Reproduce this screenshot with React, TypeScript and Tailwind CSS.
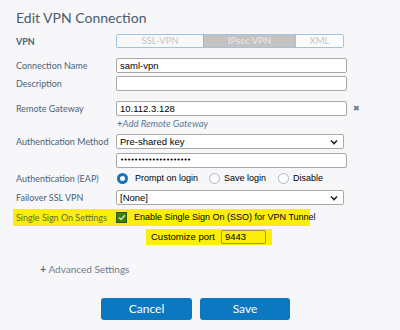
import React from "react";

const lab = "text-[9px] text-[#4b6274] leading-none whitespace-nowrap shrink-0";
const inp =
  "h-[15px] bg-white border border-[#a8a8a8] rounded-[2px] flex items-center pl-[3px] text-[9.5px] text-black leading-none whitespace-nowrap shrink-0";
const sys = { fontFamily: "'Liberation Sans', sans-serif" };

function Chevron() {
  return (
    <svg width="8" height="6" viewBox="0 0 8 6" className="mr-[5px]">
      <path d="M1 1.5 L4 4.5 L7 1.5" stroke="#222" strokeWidth="1.6" fill="none" />
    </svg>
  );
}

function Radio({ on }: { on?: boolean }) {
  return on ? (
    <span className="w-[11px] h-[11px] rounded-full border-[3px] border-[#1b72b8] bg-white inline-block" />
  ) : (
    <span className="w-[11px] h-[11px] rounded-full border border-[#a9b8c4] bg-white inline-block" />
  );
}

export default function App() {
  return (
    <div
      className="w-[400px] h-[330px] bg-[#f7f7fa] overflow-hidden relative"
      style={{ fontFamily: "Lato, 'Liberation Sans', sans-serif" }}
    >
      <div className="pl-[16px] pt-[9px]">
        <div className="text-[14px] text-[#4a5c6b] leading-[18px]">Edit VPN Connection</div>

        {/* VPN */}
        <div className="flex items-center mt-[7px] h-[14px]">
          <div className={`${lab} w-[100px] font-bold`}>VPN</div>
          <div className="flex h-[14px] w-[228px] border border-[#9fc4e2] rounded-[2px] overflow-hidden text-[9.5px] leading-none">
            <div className="w-[86px] flex items-center justify-center text-[#bfc4ca] bg-[#f8f9fb]">SSL-VPN</div>
            <div className="w-[93px] flex items-center justify-center text-[#eaeaea] bg-[#c3c3c3] border-l border-[#b0b0b0] border-r border-r-[#9fc4e2]">IPsec VPN</div>
            <div className="flex-1 flex items-center justify-center text-[#bfc4ca] bg-[#fbfcfd]">XML</div>
          </div>
        </div>

        {/* Connection Name */}
        <div className="flex items-center mt-[10px]">
          <div className={`${lab} w-[100px]`}>Connection Name</div>
          <div className={`${inp} w-[231px]`} style={sys}>saml-vpn</div>
        </div>
        {/* Description */}
        <div className="flex items-center mt-[3px]">
          <div className={`${lab} w-[100px]`}>Description</div>
          <div className={`${inp} w-[231px]`} />
        </div>

        {/* Remote Gateway */}
        <div className="flex items-center mt-[10px]">
          <div className={`${lab} w-[100px]`}>Remote Gateway</div>
          <div className={`${inp} w-[231px]`} style={sys}>10.112.3.128</div>
          <span className="ml-[6px] text-[8px] text-[#5b7a90] leading-none" style={{ fontFamily: "'DejaVu Sans', sans-serif" }}>✖</span>
        </div>
        <div className="flex mt-[2px] h-[12px] items-center">
          <div className="w-[100px] shrink-0" />
          <div className="text-[9.5px] italic text-[#5e7d95] leading-none pl-[1px] whitespace-nowrap">
            <span className="not-italic font-bold">+</span>Add Remote Gateway
          </div>
        </div>

        {/* Auth Method */}
        <div className="flex items-center mt-[4px]">
          <div className={`${lab} w-[100px]`}>Authentication Method</div>
          <div className={`${inp} w-[228px] justify-between`} style={sys}>
            <span>Pre-shared key</span>
            <Chevron />
          </div>
        </div>
        <div className="flex items-center mt-[4px]">
          <div className="w-[100px] shrink-0" />
          <div className={`${inp} w-[231px]`}>
            <span className="text-[7px] tracking-[-0.6px] leading-none" style={{ fontFamily: "'DejaVu Sans', sans-serif" }}>••••••••••••••••••••</span>
          </div>
        </div>

        {/* EAP */}
        <div className="flex items-center mt-[4px] h-[12px]">
          <div className={`${lab} w-[100px]`}>Authentication (EAP)</div>
          <div className="flex items-center text-[9px] text-black leading-none whitespace-nowrap" style={sys}>
            <span className="ml-[1px] flex"><Radio on /></span>
            <span className="ml-[7px]">Prompt on login</span>
            <span className="ml-[11px] flex"><Radio /></span>
            <span className="ml-[4px]">Save login</span>
            <span className="ml-[12px] flex"><Radio /></span>
            <span className="ml-[4px]">Disable</span>
          </div>
        </div>

        {/* Failover */}
        <div className="flex items-center mt-[6px]">
          <div className={`${lab} w-[100px]`}>Failover SSL VPN</div>
          <div className={`${inp} w-[228px] justify-between`} style={sys}>
            <span>[None]</span>
            <Chevron />
          </div>
        </div>

        {/* SSO */}
        <div className="flex items-center mt-[4px] h-[17px] -ml-[3px] w-[297px] bg-[#fbee0c] pl-[3px]">
          <div className="text-[9px] text-[#5f6e2c] leading-none w-[100px] whitespace-nowrap shrink-0">Single Sign On Settings</div>
          <span className="w-[11px] h-[11px] shrink-0 bg-[#3f7e12] border border-[#2c5a0c] flex items-center justify-center">
            <svg width="8" height="7" viewBox="0 0 8 7">
              <path d="M1 3.5 L3 5.5 L7 1.2" stroke="#d8e890" strokeWidth="1.4" fill="none" />
            </svg>
          </span>
          <span className="ml-[7px] text-[9px] text-black leading-none whitespace-nowrap" style={sys}>
            Enable Single Sign On (SSO) for VPN Tunnel
          </span>
        </div>
        <div className="flex mt-[3px]">
          <div className="w-[130px] shrink-0" />
          <div className="flex items-center h-[16px] bg-[#fbee0c] pl-[5px] pr-[6px]">
            <span className="text-[9.5px] text-black leading-none whitespace-nowrap" style={sys}>Customize port</span>
            <div className="ml-[6px] h-[14px] w-[45px] border border-[#9a9a40] rounded-[2px] flex items-center pl-[3px] text-[9.5px] text-black leading-none" style={sys}>9443</div>
          </div>
        </div>

        {/* Advanced */}
        <div className="mt-[18px] ml-[24px] text-[10px] text-[#6d7c89] leading-none flex items-center whitespace-nowrap">
          <span className="font-bold text-[#5b6a77] text-[11px] mr-[2px]">+</span>Advanced Settings
        </div>
      </div>

      {/* Buttons */}
      <div className="flex gap-[8px] mt-[24px] ml-[101px]">
        <div className="w-[91px] h-[22px] bg-[#0b78c1] rounded-[3px] text-white text-[12px] flex items-center justify-center">Cancel</div>
        <div className="w-[90px] h-[22px] bg-[#0b78c1] rounded-[3px] text-white text-[12px] flex items-center justify-center">Save</div>
      </div>
    </div>
  );
}
